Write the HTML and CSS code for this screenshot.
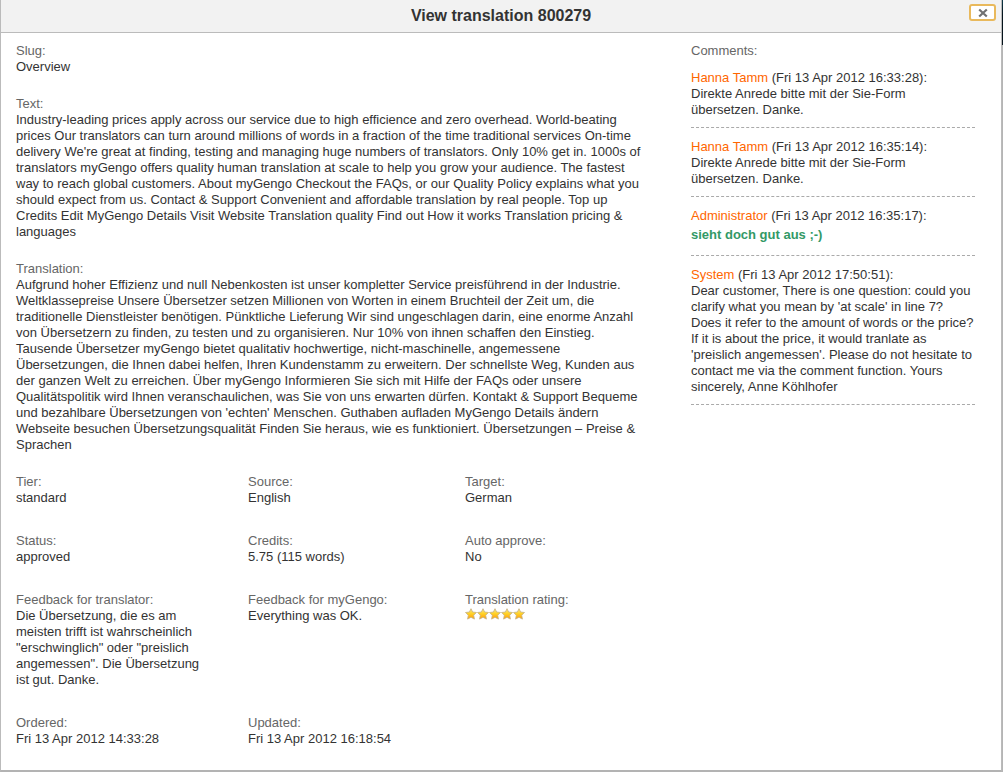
FILE: index.html
```html
<!DOCTYPE html>
<html lang="en">
<head>
<meta charset="utf-8">
<title>View translation 800279</title>
<link rel="stylesheet" href="styles.css">
</head>
<body>
<svg class="defs" aria-hidden="true">
  <defs>
    <linearGradient id="gold" x1="0" y1="0" x2="0" y2="1">
      <stop offset="0" stop-color="#ffe98a"/>
      <stop offset="0.45" stop-color="#ffd42a"/>
      <stop offset="1" stop-color="#ff9c08"/>
    </linearGradient>
    <symbol id="star" viewBox="0 0 12 12">
      <path d="M6 .7 7.6 4l3.9.5-2.8 2.7.7 3.9L6 9.3l-3.4 1.8.7-3.9L.5 4.5 4.4 4z" fill="url(#gold)" stroke="#c4b083" stroke-width=".8" stroke-linejoin="round"/>
    </symbol>
  </defs>
</svg>
<div class="dialog" role="dialog" aria-labelledby="title">
  <header class="dialog-header">
    <h1 class="dialog-title" id="title">View translation 800279</h1>
    <button class="close" type="button" aria-label="Close">
      <svg class="close-icon" viewBox="0 0 10 10"><path d="M1.2 1.5 8.8 8.5M8.8 1.5 1.2 8.5" stroke="#707070" stroke-width="2.2"/></svg>
    </button>
  </header>
  <div class="dialog-body">
    <main class="details">
      <dl class="field">
        <dt>Slug:</dt>
        <dd>Overview</dd>
      </dl>
      <dl class="field">
        <dt>Text:</dt>
        <dd>Industry-leading prices apply across our service due to high efficience and zero overhead. World-beating prices Our translators can turn around millions of words in a fraction of the time traditional services On-time delivery We're great at finding, testing and managing huge numbers of translators. Only 10% get in. 1000s of translators myGengo offers quality human translation at scale to help you grow your audience. The fastest way to reach global customers. About myGengo Checkout the FAQs, or our Quality Policy explains what you should expect from us. Contact &amp; Support Convenient and affordable translation by real people. Top up Credits Edit MyGengo Details Visit Website Translation quality Find out How it works Translation pricing &amp; languages</dd>
      </dl>
      <dl class="field">
        <dt>Translation:</dt>
        <dd>Aufgrund hoher Effizienz und null Nebenkosten ist unser kompletter Service preisführend in der Industrie. Weltklassepreise Unsere Übersetzer setzen Millionen von Worten in einem Bruchteil der Zeit um, die traditionelle Dienstleister benötigen. Pünktliche Lieferung Wir sind ungeschlagen darin, eine enorme Anzahl von Übersetzern zu finden, zu testen und zu organisieren. Nur 10% von ihnen schaffen den Einstieg. Tausende Übersetzer myGengo bietet qualitativ hochwertige, nicht-maschinelle, angemessene Übersetzungen, die Ihnen dabei helfen, Ihren Kundenstamm zu erweitern. Der schnellste Weg, Kunden aus der ganzen Welt zu erreichen. Über myGengo Informieren Sie sich mit Hilfe der FAQs oder unsere Qualitätspolitik wird Ihnen veranschaulichen, was Sie von uns erwarten dürfen. Kontakt &amp; Support Bequeme und bezahlbare Übersetzungen von 'echten' Menschen. Guthaben aufladen MyGengo Details ändern Webseite besuchen Übersetzungsqualität Finden Sie heraus, wie es funktioniert. Übersetzungen – Preise &amp; Sprachen</dd>
      </dl>
      <div class="facts">
        <dl class="field"><dt>Tier:</dt><dd>standard</dd></dl>
        <dl class="field"><dt>Source:</dt><dd>English</dd></dl>
        <dl class="field"><dt>Target:</dt><dd>German</dd></dl>
        <dl class="field"><dt>Status:</dt><dd>approved</dd></dl>
        <dl class="field"><dt>Credits:</dt><dd>5.75 (115 words)</dd></dl>
        <dl class="field"><dt>Auto approve:</dt><dd>No</dd></dl>
        <dl class="field"><dt>Feedback for translator:</dt><dd>Die Übersetzung, die es am meisten trifft ist wahrscheinlich "erschwinglich" oder "preislich angemessen". Die Übersetzung ist gut. Danke.</dd></dl>
        <dl class="field"><dt>Feedback for myGengo:</dt><dd>Everything was OK.</dd></dl>
        <dl class="field">
          <dt>Translation rating:</dt>
          <dd class="stars" role="img" aria-label="5 stars">
            <svg class="star"><use href="#star"/></svg>
            <svg class="star"><use href="#star"/></svg>
            <svg class="star"><use href="#star"/></svg>
            <svg class="star"><use href="#star"/></svg>
            <svg class="star"><use href="#star"/></svg>
          </dd>
        </dl>
        <dl class="field"><dt>Ordered:</dt><dd>Fri 13 Apr 2012 14:33:28</dd></dl>
        <dl class="field"><dt>Updated:</dt><dd>Fri 13 Apr 2012 16:18:54</dd></dl>
      </div>
    </main>
    <aside class="comments">
      <h2 class="comments-title">Comments:</h2>
      <article class="comment">
        <p><span class="author">Hanna Tamm</span> (Fri 13 Apr 2012 16:33:28):</p>
        <p>Direkte Anrede bitte mit der Sie-Form übersetzen. Danke.</p>
      </article>
      <article class="comment">
        <p><span class="author">Hanna Tamm</span> (Fri 13 Apr 2012 16:35:14):</p>
        <p>Direkte Anrede bitte mit der Sie-Form übersetzen. Danke.</p>
      </article>
      <article class="comment">
        <p><span class="author">Administrator</span> (Fri 13 Apr 2012 16:35:17):</p>
        <p class="praise">sieht doch gut aus ;-)</p>
      </article>
      <article class="comment">
        <p><span class="author">System</span> (Fri 13 Apr 2012 17:50:51):</p>
        <p>Dear customer, There is one question: could you clarify what you mean by 'at scale' in line 7? Does it refer to the amount of words or the price? If it is about the price, it would tranlate as 'preislich angemessen'. Please do not hesitate to contact me via the comment function. Yours sincerely, Anne Köhlhofer</p>
      </article>
    </aside>
  </div>
</div>
</body>
</html>
```

FILE: styles.css
```css
* {
  box-sizing: border-box;
}

body {
  margin: 0;
  min-height: 100vh;
  display: flex;
  background: linear-gradient(#0d3a4a 0, #06141c 15px, #06141c 45px, #b5b5b5 45px);
  color: #333;
  font: 13px/16px "Liberation Sans", Arial, sans-serif;
}

h1, h2, p, dl, dd {
  margin: 0;
}

.defs {
  position: absolute;
  width: 0;
  height: 0;
}

.dialog {
  flex: 1;
  min-width: 0;
  margin-right: 1px;
  background: #fff;
  border: 1px solid #bbb;
  border-top: 0;
  border-bottom: 2px solid #b3b3b3;
}

.dialog-header {
  position: relative;
  padding: 6px 48px 6px 48px;
  background: #f2f2f2;
  border-bottom: 1px solid #bbb;
  text-align: center;
}

.dialog-title {
  font-size: 16px;
  line-height: 20px;
}

.close {
  position: absolute;
  top: 4px;
  right: 5px;
  width: 27px;
  height: 17px;
  padding: 0;
  display: flex;
  align-items: center;
  justify-content: center;
  background: #fff;
  border: 2px solid #e9b95c;
  border-radius: 3px;
}

.close-icon {
  width: 10px;
  height: 10px;
}

.dialog-body {
  display: grid;
  grid-template-columns: minmax(0, 635fr) minmax(0, 284fr);
  column-gap: 40px;
  padding: 10px 26px 22px 15px;
}

.details {
  display: flex;
  flex-direction: column;
  gap: 21px;
}

.facts {
  display: grid;
  grid-template-columns: 232fr 217fr 186fr;
  row-gap: 27px;
}

.facts .field {
  padding-right: 40px;
}

dt, .comments-title {
  color: #666;
  font-size: 13px;
  font-weight: normal;
}

.stars {
  display: flex;
}

.star {
  width: 12px;
  height: 12px;
}

.comments-title {
  margin-bottom: 11px;
}

.comment {
  padding-bottom: 9px;
  margin-bottom: 11px;
  border-bottom: 1px dashed #aaa;
}

.author {
  color: #f60;
}

.praise {
  padding: 3px 0;
  color: #339966;
  font-weight: bold;
}
```
